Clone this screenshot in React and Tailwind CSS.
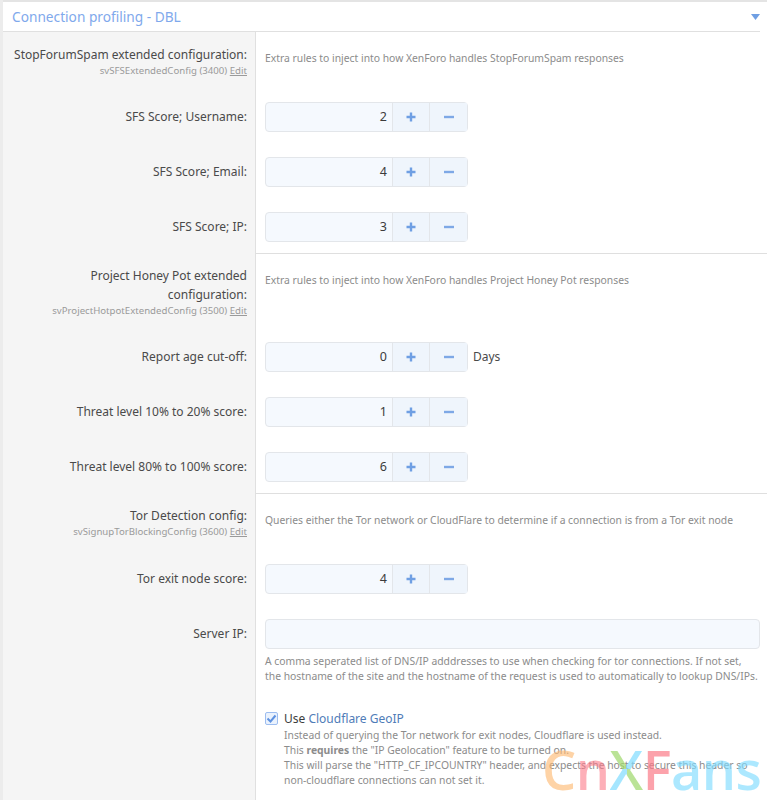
// Connection profiling options panel
import React from 'react';

const LABEL = 'text-[12px] leading-[19px] text-[#4a4a4a]';
const HINT = 'text-[10.35px] leading-[15px] text-[#8c8c8c]';
const SIDE = 'w-[253px] shrink-0 bg-[#f5f5f5] border-r border-[#e0e0e0] pr-2 text-right';

function HeadRow({ text, hint, desc, height, divider }) {
  return (
    <div className={`flex ${height}`}>
      <div className={`${SIDE} pl-[8px] pt-[13px]`}>
        <div className={LABEL}>{text}</div>
        <div className="text-[9.65px] leading-[14px] text-[#9a9a9a] whitespace-nowrap">
          {hint} <span className="underline">Edit</span>
        </div>
      </div>
      <div className={`flex-1 min-w-0 pl-[9px] pt-[19px] whitespace-nowrap ${HINT} ${divider ? 'border-t border-[#dfdfdf]' : ''}`}>{desc}</div>
    </div>
  );
}

function NumberRow({ text, value, unit, height = 'h-[55px]' }) {
  return (
    <div className={`flex ${height}`}>
      <div className={`${SIDE} pt-[17px] ${LABEL}`}>{text}</div>
      <div className="flex-1 min-w-0 pl-[9px] pt-[12px]">
        <div className="flex items-center">
          <div className="flex h-[30px] w-[203px] rounded-[4px] border border-[#e3e6ea] bg-[#f5f9fe]">
            <div className="w-[127px] border-r border-[#e3e6ea] pr-[5px] text-right text-[12.5px] leading-[28px] text-[#3c3c3c]">{value}</div>
            <div className="w-[37px] border-r border-[#e3e6ea] bg-[#eff5fc] flex items-center justify-center">
              <svg width="10" height="10" viewBox="0 0 10 10"><path d="M5 0.5v9M0.5 5h9" stroke="#6f9fe3" strokeWidth="2.4" /></svg>
            </div>
            <div className="flex-1 bg-[#eff5fc] flex items-center justify-center">
              <svg width="10" height="10" viewBox="0 0 10 10"><path d="M0 5h10" stroke="#7ea8e6" strokeWidth="2.4" /></svg>
            </div>
          </div>
          {unit && <span className="ml-[5px] text-[12px] text-[#4a4a4a]">{unit}</span>}
        </div>
      </div>
    </div>
  );
}

export default function App() {
  return (
    <div className="relative h-[800px] w-[767px] overflow-hidden border-l-[3px] border-[#ececec] bg-white font-['Noto_Sans','Open_Sans',sans-serif]">
      <div className="-ml-[3px] h-[2px] bg-[#e4e4e4]" />
      <div className="mr-[7px] flex h-[30px] items-center justify-between border-b border-[#e0e0e0] pl-[9px]">
        <span className="pt-[1px] text-[13.7px] text-[#7fa9ec]">Connection profiling - DBL</span>
        <svg width="9" height="6" viewBox="0 0 9 6"><path d="M0 0h9L4.5 6z" fill="#6f9fe3" /></svg>
      </div>

      <HeadRow
        text="StopForumSpam extended configuration:"
        hint="svSFSExtendedConfig (3400)"
        desc="Extra rules to inject into how XenForo handles StopForumSpam responses"
        height="h-[58px]"
      />
      <NumberRow text="SFS Score; Username:" value="2" />
      <NumberRow text="SFS Score; Email:" value="4" />
      <NumberRow text="SFS Score; IP:" value="3" height="h-[53px]" />

      <HeadRow
        text={<>Project Honey Pot extended<br />configuration:</>}
        hint="svProjectHotpotExtendedConfig (3500)"
        desc="Extra rules to inject into how XenForo handles Project Honey Pot responses"
        height="h-[77px]"
        divider
      />
      <NumberRow text="Report age cut-off:" value="0" unit="Days" />
      <NumberRow text="Threat level 10% to 20% score:" value="1" />
      <NumberRow text="Threat level 80% to 100% score:" value="6" height="h-[53px]" />

      <HeadRow
        text="Tor Detection config:"
        hint="svSignupTorBlockingConfig (3600)"
        desc="Queries either the Tor network or CloudFlare to determine if a connection is from a Tor exit node"
        height="h-[59px]"
        divider
      />
      <NumberRow text="Tor exit node score:" value="4" />

      <div className="flex h-[206px]">
        <div className={`${SIDE} pt-[17px] ${LABEL}`}>Server IP:</div>
        <div className="flex-1 min-w-0 pl-[9px] pr-[7px] pt-[12px]">
          <div className="h-[30px] rounded-[4px] border border-[#e3e6ea] bg-[#f5f9fe]" />
          <div className={`mt-[5px] whitespace-nowrap ${HINT}`}>
            <div>A comma seperated list of DNS/IP adddresses to use when checking for tor connections. If not set,</div>
            <div>the hostname of the site and the hostname of the request is used to automatically to lookup DNS/IPs.</div>
          </div>
          <div className="mt-[25px] flex gap-[6px]">
            <span className="mt-[3px] flex h-[13px] w-[13px] items-center justify-center rounded-[2px] border border-[#9dbdf0] bg-[#eaf2fd]">
              <svg width="11" height="9" viewBox="0 0 11 9"><path d="M1.5 4.5l3 3 5-6" fill="none" stroke="#5f92e0" strokeWidth="2" /></svg>
            </span>
            <div>
              <div className="text-[12px] leading-[19px] text-[#3c3c3c]">
                Use <span className="text-[#4f7cb8]">Cloudflare GeoIP</span>
              </div>
              <div className={`whitespace-nowrap ${HINT}`}>
                <div>Instead of querying the Tor network for exit nodes, Cloudflare is used instead.</div>
                <div>This <b>requires</b> the "IP Geolocation" feature to be turned on.</div>
                <div>This will parse the "HTTP_CF_IPCOUNTRY" header, and expects the host to secure this header so</div>
                <div>non-cloudflare connections can not set it.</div>
              </div>
            </div>
          </div>
        </div>
      </div>

      {/* watermark */}
      <div className="absolute left-[539px] top-[734px] text-[54px] font-semibold leading-[70px] font-['Open_Sans',sans-serif] tracking-[-0.5px] pointer-events-none">
        <span className="text-[#fdb56a]/60">C</span>
        <span className="text-[#fb7a88]/60">n</span>
        <span className="bg-[conic-gradient(#7fdcff_0deg_90deg,#9ed86a_90deg_180deg,#7fdcff_180deg_270deg,#9ed86a_270deg_360deg)] bg-clip-text text-transparent opacity-70">X</span>
        <span className="text-[#fb7a88]/70">F</span>
        <span className="text-[#7fdcff]/65">ans</span>
      </div>
    </div>
  );
}
